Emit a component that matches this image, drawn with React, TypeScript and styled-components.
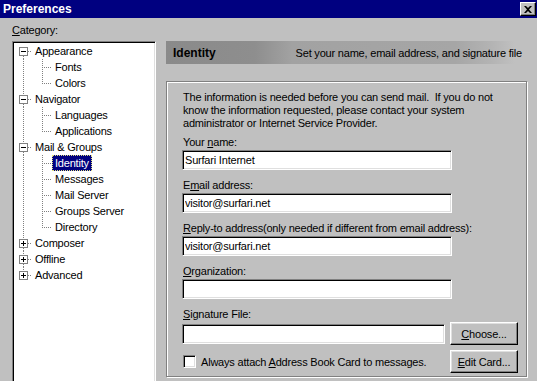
import React, { FC } from 'react'
import styled, { createGlobalStyle } from 'styled-components'

const GlobalStyle = createGlobalStyle`
  html, body {
    margin: 0;
    padding: 0;
    background: #c0c0c0;
  }
  body {
    font-family: 'Liberation Sans', Arial, sans-serif;
    font-size: 11px;
    letter-spacing: -0.2px;
    color: #000;
  }
`

const Window = styled.div`
  width: 537px;
  height: 381px;
  overflow: hidden;
  background: #c0c0c0;
  display: flex;
  flex-direction: column;
`

const TitleBar = styled.div`
  height: 18px;
  flex: none;
  background: #000080;
  color: #fff;
  font-weight: bold;
  font-size: 12px;
  letter-spacing: 0;
  display: flex;
  align-items: center;
  justify-content: space-between;
  padding: 0 0 0 3px;
`

const CloseButton = styled.div`
  width: 14px;
  height: 12px;
  margin-right: 1px;
  background: #c0c0c0;
  border: 1px solid;
  border-color: #fff #000 #000 #fff;
  box-shadow: inset -1px -1px 0 #808080;
  display: flex;
  align-items: center;
  justify-content: center;
`

const Body = styled.div`
  flex: 1;
  display: flex;
  padding-left: 12px;
  min-height: 0;
`

const LeftColumn = styled.div`
  width: 144px;
  flex: none;
  display: flex;
  flex-direction: column;
`

const CategoryLabel = styled.div`
  height: 23px;
  flex: none;
  line-height: 13px;
  padding-top: 6px;
  box-sizing: border-box;
`

const TreeBox = styled.div`
  height: 345px;
  flex: none;
  background: #fff;
  border: 1px solid;
  border-color: #808080 #fff #fff #808080;
  box-shadow: inset 1px 1px 0 #000, inset -1px -1px 0 #dfdfdf;
  padding: 1px;
`

const TreeRow = styled.div`
  height: 16px;
  display: flex;
  align-items: center;
  white-space: nowrap;
`

const NodeLabel = styled.span<{ $selected?: boolean }>`
  line-height: 14px;
  padding: 0 2px;
  border: 1px dotted ${(p) => (p.$selected ? '#e0e080' : 'transparent')};
  background: ${(p) => (p.$selected ? '#000080' : 'transparent')};
  color: ${(p) => (p.$selected ? '#fff' : '#000')};
`

const RightColumn = styled.div`
  flex: 1;
  margin-left: 10px;
  padding-top: 23px;
  display: flex;
  flex-direction: column;
`

const Banner = styled.div`
  height: 23px;
  flex: none;
  display: flex;
  align-items: center;
  justify-content: space-between;
  padding: 0 15px 0 7px;
  background: linear-gradient(
    to right,
    #8a8a8a 0%,
    #8e8e8e 24%,
    #a2a2a2 34%,
    #a6a6a6 78%,
    #b4b4b4 88%,
    #c0c0c0 94%
  );
`

const BannerTitle = styled.span`
  font-weight: bold;
  font-size: 12px;
  letter-spacing: 0;
`

const GroupBox = styled.div`
  margin-top: 17px;
  width: 361px;
  height: 296px;
  flex: none;
  border: 1px solid #808080;
  box-shadow: inset 1px 1px 0 #fff, 1px 1px 0 #fff;
  padding: 9px 8px 0 15px;
  box-sizing: border-box;
  display: flex;
  flex-direction: column;
`

const Intro = styled.p`
  margin: 0;
  line-height: 13px;
  padding-left: 1px;
`

const Field = styled.div<{ $gap?: number }>`
  margin-top: ${(p) => p.$gap ?? 9}px;
  display: flex;
  flex-direction: column;
`

const FieldLabel = styled.label`
  line-height: 13px;
  padding-left: 1px;
  margin-bottom: 1px;
`

const TextInput = styled.input<{ $width?: number }>`
  width: ${(p) => p.$width ?? 270}px;
  height: 20px;
  box-sizing: border-box;
  margin: 0;
  padding: 0 2px;
  font-family: inherit;
  font-size: 11px;
  letter-spacing: inherit;
  color: #000;
  background: #fff;
  border: 1px solid;
  border-color: #808080 #fff #fff #808080;
  box-shadow: inset 1px 1px 0 #000, inset -1px -1px 0 #dfdfdf;
  outline: none;
`

const InlineRow = styled.div<{ $gap?: number }>`
  display: flex;
  align-items: center;
  justify-content: space-between;
  margin-top: ${(p) => p.$gap ?? 0}px;
`

const Button = styled.button`
  width: 68px;
  height: 23px;
  padding: 0;
  font-family: inherit;
  font-size: 11px;
  letter-spacing: inherit;
  color: #000;
  background: #c0c0c0;
  border: 1px solid;
  border-color: #fff #000 #000 #fff;
  box-shadow: inset -1px -1px 0 #808080, inset 1px 1px 0 #dfdfdf;
`

const CheckLabel = styled.label`
  display: flex;
  align-items: center;
  gap: 5px;
  padding-left: 1px;
`

const CheckBox = styled.span`
  width: 13px;
  height: 13px;
  box-sizing: border-box;
  background: #fff;
  border: 1px solid;
  border-color: #808080 #fff #fff #808080;
  box-shadow: inset 1px 1px 0 #000, inset -1px -1px 0 #dfdfdf;
`

const U: FC<{ children: string }> = ({ children }) => <u>{children}</u>

type Node = { label: string; open: boolean; children?: string[] }

const tree: Node[] = [
  { label: 'Appearance', open: true, children: ['Fonts', 'Colors'] },
  { label: 'Navigator', open: true, children: ['Languages', 'Applications'] },
  {
    label: 'Mail & Groups',
    open: true,
    children: ['Identity', 'Messages', 'Mail Server', 'Groups Server', 'Directory'],
  },
  { label: 'Composer', open: false },
  { label: 'Offline', open: false },
  { label: 'Advanced', open: false },
]

const dots = { stroke: '#808080', strokeDasharray: '1 1', shapeRendering: 'crispEdges' as const }

const RootLines: FC<{ first: boolean; last: boolean; open: boolean }> = ({ first, last, open }) => (
  <svg width={18} height={16}>
    {!first && <line x1={9.5} y1={0} x2={9.5} y2={4} {...dots} />}
    {!last && <line x1={9.5} y1={13} x2={9.5} y2={16} {...dots} />}
    <line x1={14} y1={8.5} x2={18} y2={8.5} {...dots} />
    <rect x={5.5} y={4.5} width={8} height={8} fill='#fff' stroke='#808080' shapeRendering='crispEdges' />
    <line x1={7} y1={8.5} x2={12} y2={8.5} stroke='#000' shapeRendering='crispEdges' />
    {!open && <line x1={9.5} y1={6} x2={9.5} y2={11} stroke='#000' shapeRendering='crispEdges' />}
  </svg>
)

const ChildLines: FC<{ last: boolean }> = ({ last }) => (
  <svg width={38} height={16}>
    <line x1={9.5} y1={0} x2={9.5} y2={16} {...dots} />
    <line x1={28.5} y1={0} x2={28.5} y2={last ? 9 : 16} {...dots} />
    <line x1={30} y1={8.5} x2={38} y2={8.5} {...dots} />
  </svg>
)

const Tree: FC = () => (
  <TreeBox>
    {tree.map((node, i) => (
      <React.Fragment key={node.label}>
        <TreeRow>
          <RootLines first={i === 0} last={i === tree.length - 1} open={node.open} />
          <NodeLabel>{node.label}</NodeLabel>
        </TreeRow>
        {node.open &&
          node.children?.map((child, j) => (
            <TreeRow key={child}>
              <ChildLines last={j === node.children!.length - 1} />
              <NodeLabel $selected={child === 'Identity'}>{child}</NodeLabel>
            </TreeRow>
          ))}
      </React.Fragment>
    ))}
  </TreeBox>
)

export default function App() {
  return (
    <Window>
      <GlobalStyle />
      <TitleBar>
        <span>Preferences</span>
        <CloseButton>
          <svg width={8} height={7}>
            <path d='M0 0h2l2 2 2-2h2L5 3.5 8 7H6L4 5 2 7H0l3-3.5z' fill='#000' />
          </svg>
        </CloseButton>
      </TitleBar>
      <Body>
        <LeftColumn>
          <CategoryLabel>
            <U>C</U>ategory:
          </CategoryLabel>
          <Tree />
        </LeftColumn>
        <RightColumn>
          <Banner>
            <BannerTitle>Identity</BannerTitle>
            <span>Set your name, email address, and signature file</span>
          </Banner>
          <GroupBox>
            <Intro>
              The information is needed before you can send mail.&nbsp; If you do not
              <br />
              know the information requested, please contact your system
              <br />
              administrator or Internet Service Provider.
            </Intro>
            <Field $gap={6}>
              <FieldLabel>
                Your <U>n</U>ame:
              </FieldLabel>
              <TextInput readOnly value='Surfari Internet' />
            </Field>
            <Field>
              <FieldLabel>
                E<U>m</U>ail address:
              </FieldLabel>
              <TextInput readOnly value='visitor@surfari.net' />
            </Field>
            <Field>
              <FieldLabel>
                <U>R</U>eply-to address(only needed if different from email address):
              </FieldLabel>
              <TextInput readOnly value='visitor@surfari.net' />
            </Field>
            <Field>
              <FieldLabel>
                <U>O</U>rganization:
              </FieldLabel>
              <TextInput readOnly value='' />
            </Field>
            <Field>
              <FieldLabel>
                <U>S</U>ignature File:
              </FieldLabel>
              <InlineRow>
                <TextInput readOnly value='' $width={263} />
                <Button>
                  <U>C</U>hoose...
                </Button>
              </InlineRow>
            </Field>
            <InlineRow $gap={5}>
              <CheckLabel>
                <CheckBox />
                <span>
                  Always attach <U>A</U>ddress Book Card to messages.
                </span>
              </CheckLabel>
              <Button>
                <U>E</U>dit Card...
              </Button>
            </InlineRow>
          </GroupBox>
        </RightColumn>
      </Body>
    </Window>
  )
}
